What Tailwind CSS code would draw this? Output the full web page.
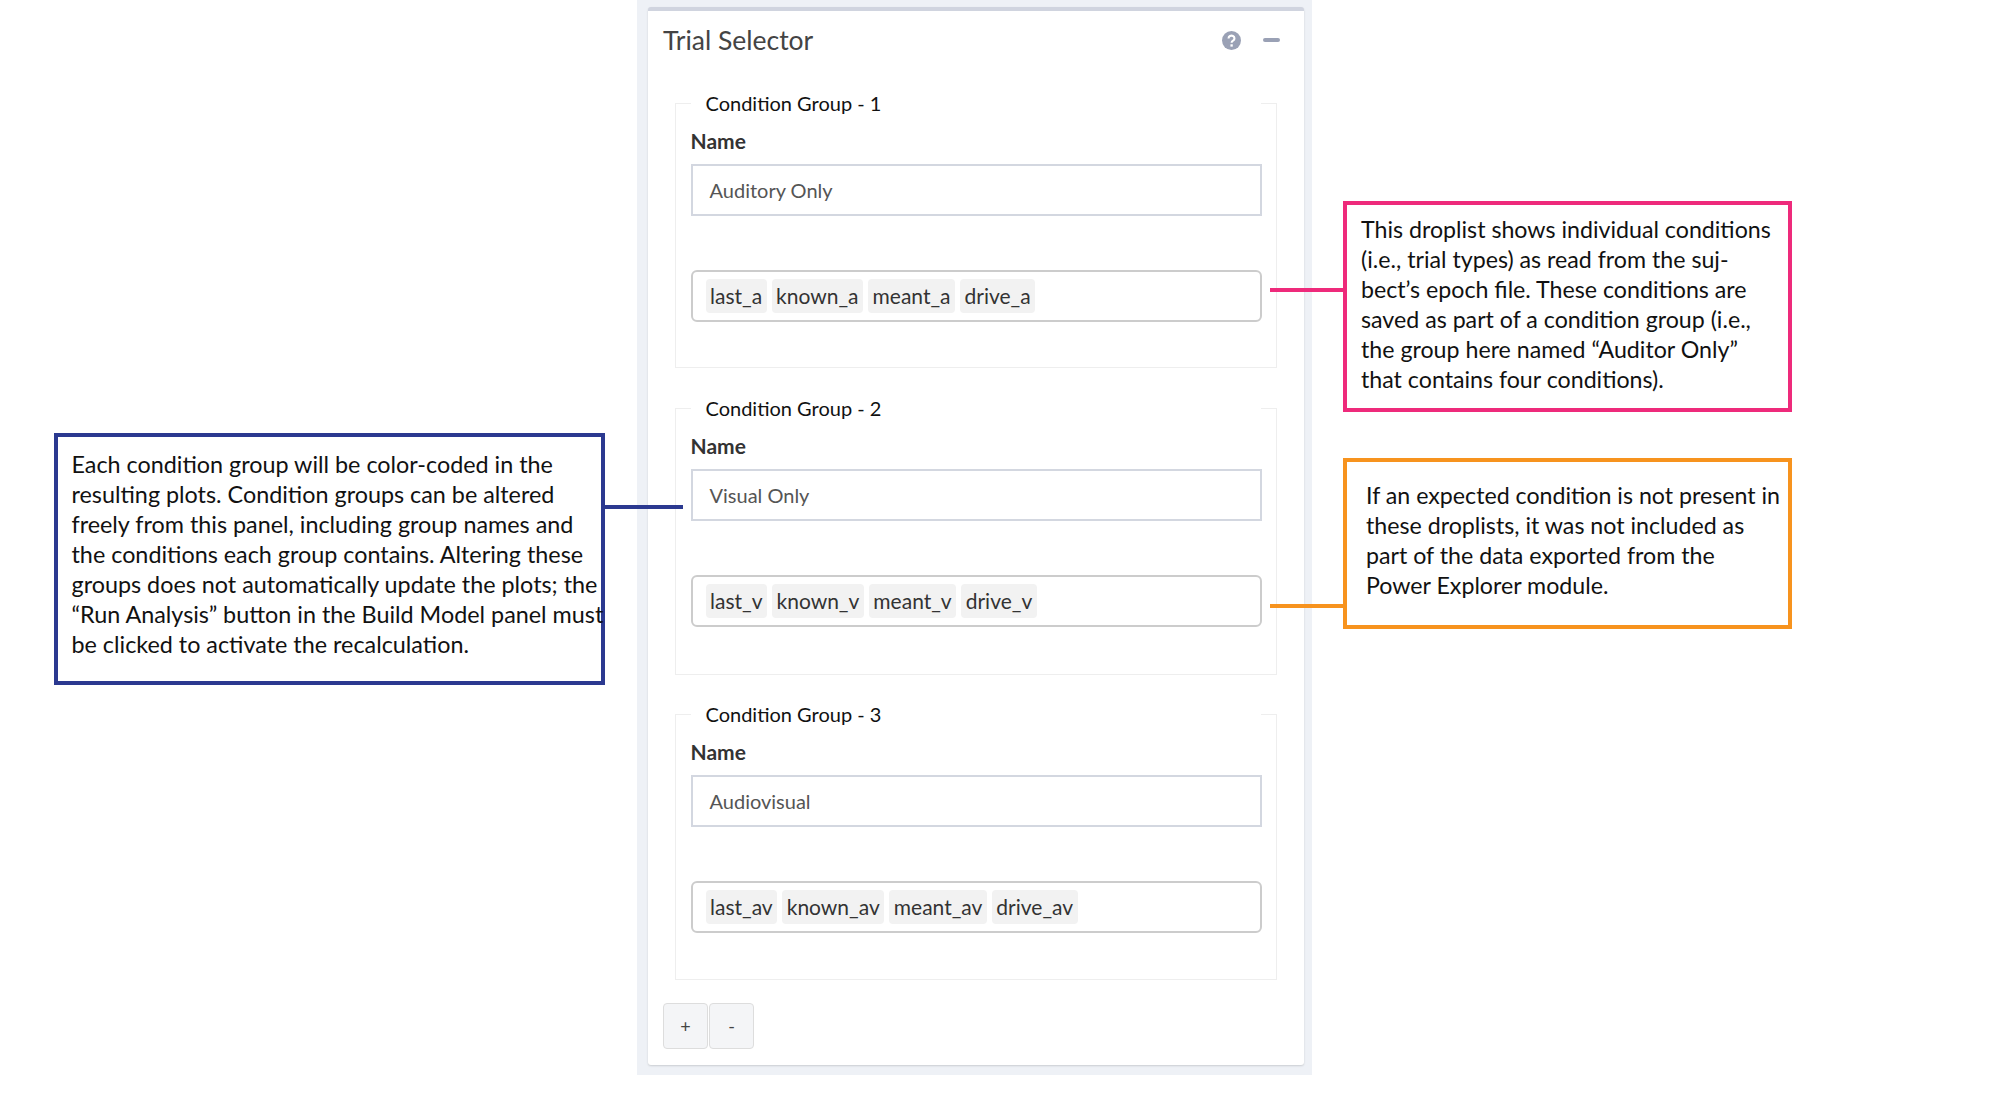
<!DOCTYPE html>
<html lang="en">
<head>
<meta charset="UTF-8">
<title>Trial Selector</title>
<script src="https://cdn.jsdelivr.net/npm/@tailwindcss/browser@4"></script>
</head>
<body class="bg-white font-['Lato',sans-serif]">
<div class="relative w-[2000px] h-[1112px] overflow-hidden">

  <!-- panel -->
  <div class="ml-[637px] w-[675px] h-[1075px] bg-[#eef1f6] pl-[11px] pr-[8px] pt-[7px]">
    <div class="h-[1058px] bg-white rounded-[3px] border-t-4 border-[#d0d4df] shadow-[0_1px_2px_rgba(0,0,0,0.15)]">
      <div class="flex items-center justify-between pl-[15px] pr-[24px] h-[58px]">
        <h1 class="text-[26.5px] leading-none text-[#444]">Trial Selector</h1>
        <div class="flex items-center gap-[22px]">
          <svg width="19" height="19" viewBox="0 0 18 18"><circle cx="9" cy="9" r="9" fill="#9aa1b5"/><path d="M6.2 7a2.8 2.6 0 1 1 4.3 2.2c-1 .6-1.4 1-1.4 2" fill="none" stroke="#fff" stroke-width="2"/><rect x="8" y="12.6" width="2.2" height="2.2" fill="#fff"/></svg>
          <div class="w-[17px] h-[4px] rounded-sm bg-[#9aa1b5]"></div>
        </div>
      </div>

      <div class="flex flex-col gap-[40px] mx-[27px] mt-[34px]">
        <!-- group 1 -->
        <div class="relative h-[265px] border border-[#eeeeee] border-t-0 px-[14.5px]">
          <div class="absolute left-0 top-0 w-[15px] border-t border-[#eeeeee]"></div>
          <div class="absolute right-0 top-0 w-[15px] border-t border-[#eeeeee]"></div>
          <div class="absolute left-[29.5px] top-[-13px] text-[20px] leading-[26px] text-[#111]">Condition Group - 1</div>
          <label class="block pt-[26px] text-[21px] leading-6 font-bold text-[#333]">Name</label>
          <div class="mt-[11px] h-[52px] border-2 border-[#d3d7e0] flex items-center pl-[17px] text-[20px] text-[#555]">Auditory Only</div>
          <div class="mt-[54px] h-[52px] border-2 border-[#cccccc] rounded-[6px] flex items-center gap-[5px] pl-[13px] text-[21px] text-[#333]">
            <span class="h-[34px] leading-[33px] px-[4.5px] rounded-[4px] bg-[#f2f2f2]">last_a</span>
            <span class="h-[34px] leading-[33px] px-[4.5px] rounded-[4px] bg-[#f2f2f2]">known_a</span>
            <span class="h-[34px] leading-[33px] px-[4.5px] rounded-[4px] bg-[#f2f2f2]">meant_a</span>
            <span class="h-[34px] leading-[33px] px-[4.5px] rounded-[4px] bg-[#f2f2f2]">drive_a</span>
          </div>
        </div>
        <!-- group 2 -->
        <div class="relative h-[267px] border border-[#eeeeee] border-t-0 px-[14.5px]">
          <div class="absolute left-0 top-0 w-[15px] border-t border-[#eeeeee]"></div>
          <div class="absolute right-0 top-0 w-[15px] border-t border-[#eeeeee]"></div>
          <div class="absolute left-[29.5px] top-[-13px] text-[20px] leading-[26px] text-[#111]">Condition Group - 2</div>
          <label class="block pt-[26px] text-[21px] leading-6 font-bold text-[#333]">Name</label>
          <div class="mt-[11px] h-[52px] border-2 border-[#d3d7e0] flex items-center pl-[17px] text-[20px] text-[#555]">Visual Only</div>
          <div class="mt-[54px] h-[52px] border-2 border-[#cccccc] rounded-[6px] flex items-center gap-[5px] pl-[13px] text-[21px] text-[#333]">
            <span class="h-[34px] leading-[33px] px-[4.5px] rounded-[4px] bg-[#f2f2f2]">last_v</span>
            <span class="h-[34px] leading-[33px] px-[4.5px] rounded-[4px] bg-[#f2f2f2]">known_v</span>
            <span class="h-[34px] leading-[33px] px-[4.5px] rounded-[4px] bg-[#f2f2f2]">meant_v</span>
            <span class="h-[34px] leading-[33px] px-[4.5px] rounded-[4px] bg-[#f2f2f2]">drive_v</span>
          </div>
        </div>
        <!-- group 3 -->
        <div class="relative h-[266px] border border-[#eeeeee] border-t-0 px-[14.5px] -mt-[1px]">
          <div class="absolute left-0 top-0 w-[15px] border-t border-[#eeeeee]"></div>
          <div class="absolute right-0 top-0 w-[15px] border-t border-[#eeeeee]"></div>
          <div class="absolute left-[29.5px] top-[-13px] text-[20px] leading-[26px] text-[#111]">Condition Group - 3</div>
          <label class="block pt-[26px] text-[21px] leading-6 font-bold text-[#333]">Name</label>
          <div class="mt-[11px] h-[52px] border-2 border-[#d3d7e0] flex items-center pl-[17px] text-[20px] text-[#555]">Audiovisual</div>
          <div class="mt-[54px] h-[52px] border-2 border-[#cccccc] rounded-[6px] flex items-center gap-[5px] pl-[13px] text-[21px] text-[#333]">
            <span class="h-[34px] leading-[33px] px-[4.5px] rounded-[4px] bg-[#f2f2f2]">last_av</span>
            <span class="h-[34px] leading-[33px] px-[4.5px] rounded-[4px] bg-[#f2f2f2]">known_av</span>
            <span class="h-[34px] leading-[33px] px-[4.5px] rounded-[4px] bg-[#f2f2f2]">meant_av</span>
            <span class="h-[34px] leading-[33px] px-[4.5px] rounded-[4px] bg-[#f2f2f2]">drive_av</span>
          </div>
        </div>
      </div>

      <div class="flex gap-[1px] ml-[15px] mt-[23px]">
        <button class="w-[45px] h-[46px] rounded-[4px] border border-[#dddddd] bg-[#f4f5f7] text-[18px] text-[#444]">+</button>
        <button class="w-[45px] h-[46px] rounded-[4px] border border-[#dddddd] bg-[#f4f5f7] text-[18px] text-[#444]">-</button>
      </div>
    </div>
  </div>

  <!-- annotations over the screenshot -->
  <div class="absolute left-[54px] top-[433px] w-[551px] h-[252px] border-4 border-[#2b3990] pl-[13.5px] pt-[12px] text-[23.35px] leading-[30px] text-[#111] whitespace-nowrap">
    Each condition group will be color-coded in the<br>resulting plots. Condition groups can be altered<br>freely from this panel, including group names and<br>the conditions each group contains. Altering these<br>groups does not automatically update the plots; the<br>“Run Analysis” button in the Build Model panel must<br>be clicked to activate the recalculation.
  </div>
  <div class="absolute left-[605px] top-[505px] w-[78px] h-[4px] bg-[#2b3990]"></div>

  <div class="absolute left-[1343px] top-[201px] w-[449px] h-[211px] border-4 border-[#ee2a7b] pl-[14px] pt-[9px] text-[23.2px] leading-[30px] text-[#111] whitespace-nowrap">
    This droplist shows individual conditions<br>(i.e., trial types) as read from the suj-<br>bect’s epoch file. These conditions are<br>saved as part of a condition group (i.e.,<br>the group here named “Auditor Only”<br>that contains four conditions).
  </div>
  <div class="absolute left-[1270px] top-[288px] w-[73px] h-[4px] bg-[#ee2a7b]"></div>

  <div class="absolute left-[1343px] top-[458px] w-[449px] h-[171px] border-4 border-[#f7931e] pl-[19px] pt-[18px] text-[23.2px] leading-[30px] text-[#111] whitespace-nowrap">
    If an expected condition is not present in<br>these droplists, it was not included as<br>part of the data exported from the<br>Power Explorer module.
  </div>
  <div class="absolute left-[1270px] top-[604px] w-[73px] h-[4px] bg-[#f7931e]"></div>
</div>
</body>
</html>
